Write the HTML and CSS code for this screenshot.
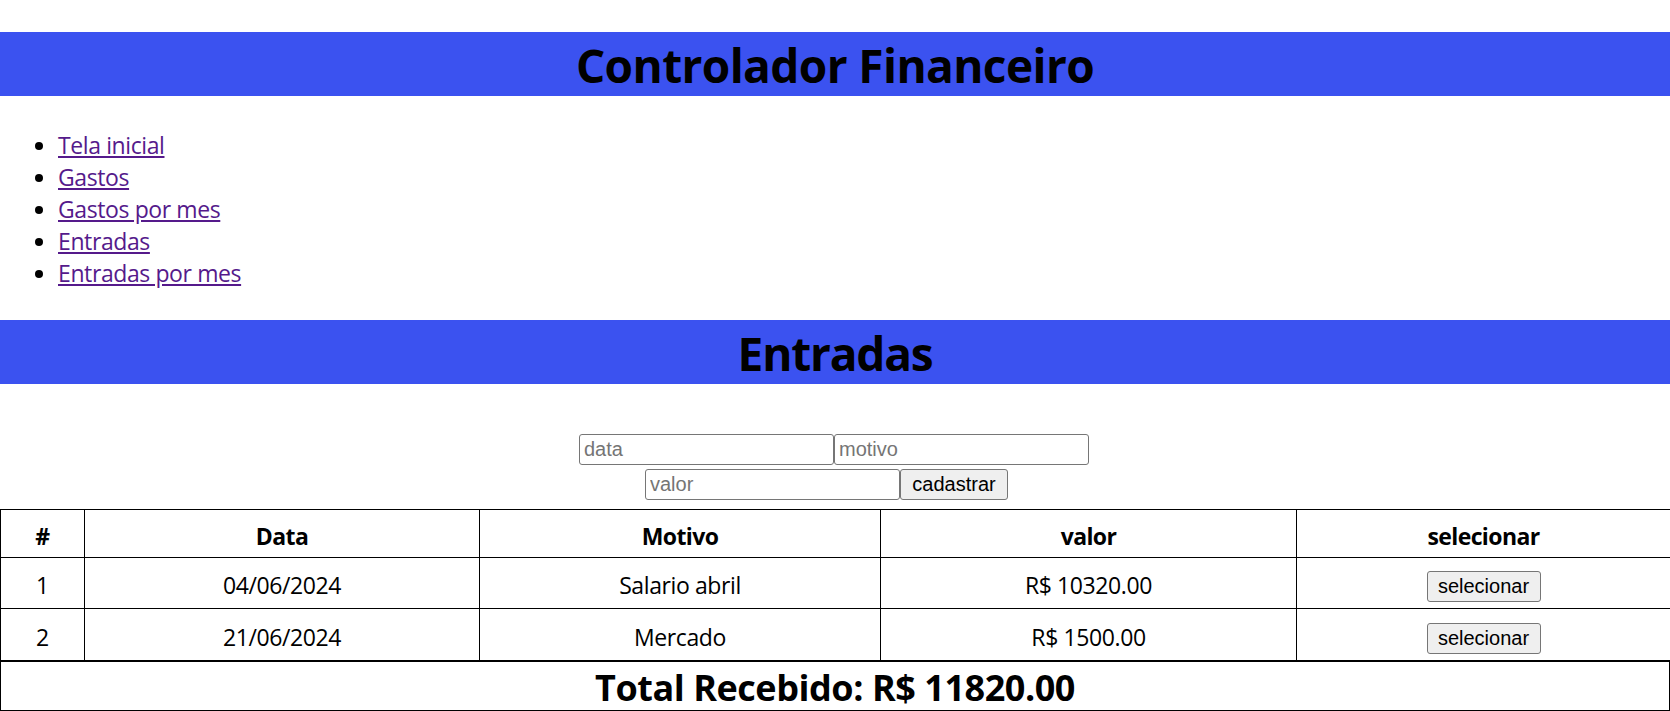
FILE: index.html
```html
<!DOCTYPE html>
<html lang="pt-BR">
<head>
<meta charset="utf-8">
<title>Controlador Financeiro</title>
<link rel="stylesheet" href="styles.css">
</head>
<body>
<h1 class="banner banner-main">Controlador Financeiro</h1>
<ul class="nav">
  <li><a class="nav-link" href="#">Tela inicial</a></li>
  <li><a class="nav-link" href="#">Gastos</a></li>
  <li><a class="nav-link" href="#">Gastos por mes</a></li>
  <li><a class="nav-link" href="#">Entradas</a></li>
  <li><a class="nav-link" href="#">Entradas por mes</a></li>
</ul>
<h1 class="banner banner-section">Entradas</h1>
<form class="entry-form">
  <div class="form-row form-row-top">
    <input class="field" type="text" placeholder="data">
    <input class="field" type="text" placeholder="motivo">
  </div>
  <div class="form-row form-row-bottom">
    <input class="field" type="text" placeholder="valor">
    <button class="btn btn-submit" type="button">cadastrar</button>
  </div>
</form>
<table class="ledger">
  <colgroup>
    <col class="col-id">
    <col class="col-date">
    <col class="col-reason">
    <col class="col-value">
    <col class="col-select">
  </colgroup>
  <thead>
    <tr class="head-row">
      <th>#</th>
      <th>Data</th>
      <th>Motivo</th>
      <th>valor</th>
      <th>selecionar</th>
    </tr>
  </thead>
  <tbody>
    <tr class="body-row">
      <td>1</td>
      <td>04/06/2024</td>
      <td>Salario abril</td>
      <td>R$ 10320.00</td>
      <td><button class="btn btn-select" type="button">selecionar</button></td>
    </tr>
    <tr class="body-row body-row-last">
      <td>2</td>
      <td>21/06/2024</td>
      <td>Mercado</td>
      <td>R$ 1500.00</td>
      <td><button class="btn btn-select" type="button">selecionar</button></td>
    </tr>
  </tbody>
</table>
<div class="total">Total Recebido: R$ 11820.00</div>
</body>
</html>
```

FILE: styles.css
```css
html, body {
  margin: 0;
  padding: 0;
  background: #ffffff;
}

body {
  font-family: "Open Sans", "Noto Sans", sans-serif;
  font-size: 23px;
  color: #000000;
}

.banner {
  box-sizing: border-box;
  margin: 32px 0;
  height: 64px;
  padding-top: 2px;
  line-height: 62px;
  font-size: 46px;
  font-weight: 700;
  text-align: center;
  background: #3b52f0;
  color: #000000;
}

.banner-main {
  letter-spacing: -0.6px;
}

.banner-section {
  margin-bottom: 0;
  letter-spacing: -1.2px;
}

.nav {
  margin: 32px 0;
  padding: 0 0 0 58px;
  list-style: disc;
  font-size: 23px;
}

.nav li {
  box-sizing: border-box;
  height: 32px;
  padding-top: 2px;
  line-height: 30px;
}

.nav-link {
  color: #551a8b;
  text-decoration: underline;
  letter-spacing: -0.4px;
}

.entry-form {
  display: flex;
  flex-direction: column;
  align-items: center;
  gap: 4px;
  padding: 50px 0 0;
  margin: 0 0 9px;
}

.form-row {
  display: flex;
  justify-content: center;
  height: 31px;
}

.form-row-top {
  padding-right: 2px;
}

.form-row-bottom {
  padding-right: 17px;
}

.field {
  box-sizing: border-box;
  width: 255px;
  height: 31px;
  margin: 0;
  padding: 1px 4px;
  font-family: "Liberation Sans", Arial, sans-serif;
  font-size: 20px;
  border: 1px solid #767676;
  border-radius: 3px;
  background: #ffffff;
  color: #000000;
}

.field::placeholder {
  color: #757575;
}

.btn {
  box-sizing: border-box;
  height: 31px;
  margin: 0;
  padding: 0 8px;
  font-family: "Liberation Sans", Arial, sans-serif;
  font-size: 20px;
  color: #000000;
  background: #efefef;
  border: 1px solid #767676;
  border-radius: 3px;
}

.btn-submit {
  width: 108px;
}

.btn-select {
  width: 114px;
  vertical-align: middle;
  letter-spacing: 0;
}

.ledger {
  width: 100%;
  border-collapse: collapse;
  table-layout: fixed;
}

.col-id { width: 84px; }
.col-date { width: 395px; }
.col-reason { width: 401px; }
.col-value { width: 416px; }
.col-select { width: 374px; }

.ledger th,
.ledger td {
  border: 1px solid #000000;
  padding: 4px 0 0;
  text-align: center;
  vertical-align: middle;
  line-height: 32px;
  letter-spacing: -0.4px;
}

.ledger th {
  font-weight: 700;
  letter-spacing: -0.6px;
}

.head-row {
  height: 48px;
}

.body-row {
  height: 51px;
}

.body-row-last {
  height: 52px;
}

.total {
  border: 1px solid #000000;
  height: 45px;
  padding-top: 3px;
  line-height: 45px;
  font-size: 36px;
  font-weight: 700;
  text-align: center;
  letter-spacing: -0.45px;
}
```
